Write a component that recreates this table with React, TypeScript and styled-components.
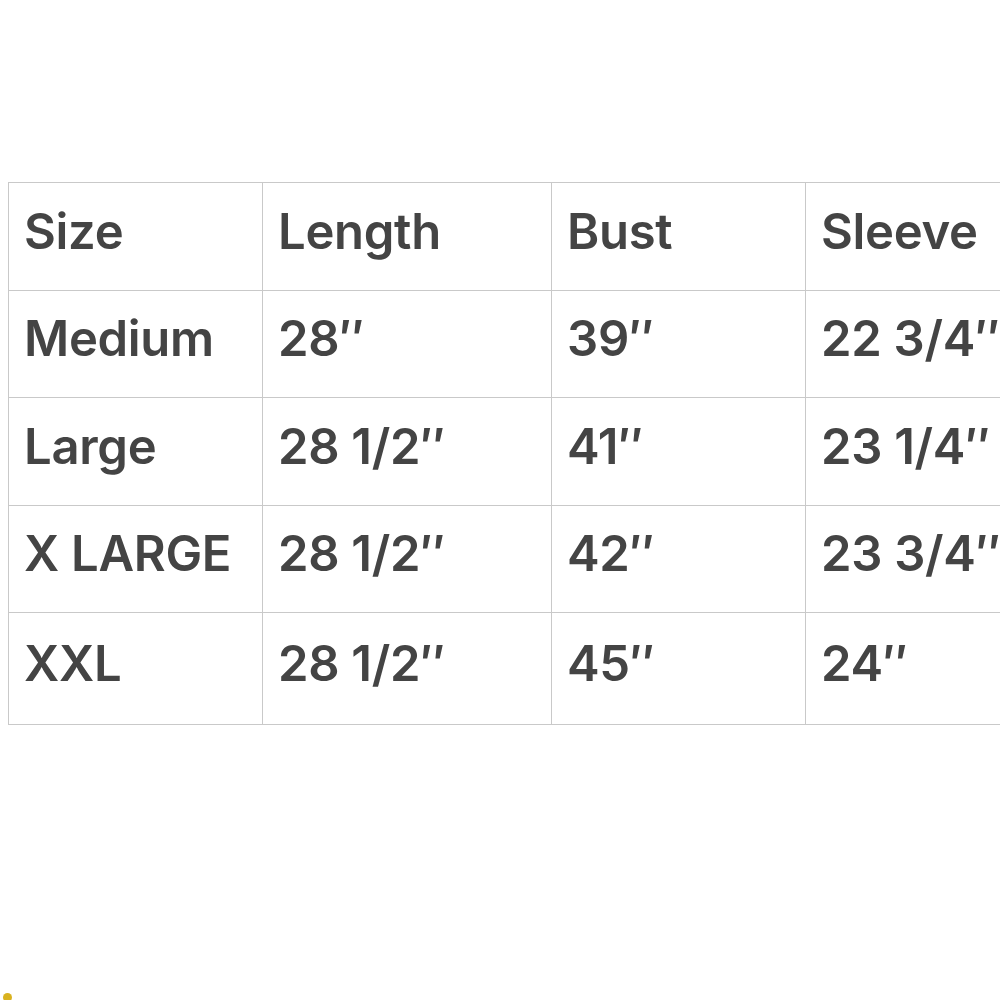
import styled, { createGlobalStyle } from "styled-components";

const GlobalStyle = createGlobalStyle`
  html, body {
    margin: 0;
    padding: 0;
    background: #ffffff;
    overflow: hidden;
  }
  body {
    font-family: Inter, "Liberation Sans", Arial, sans-serif;
  }
`;

const rows: string[][] = [
  ["Size", "Length", "Bust", "Sleeve"],
  ["Medium", "28″", "39″", "22 3/4″"],
  ["Large", "28 1/2″", "41″", "23 1/4″"],
  ["X LARGE", "28 1/2″", "42″", "23 3/4″"],
  ["XXL", "28 1/2″", "45″", "24″"],
];

const colWidths = [254, 289, 254, 260];

function App() {
  return (
    <Page>
      <GlobalStyle />
      <Frame>
        <SizeTable>
          <colgroup>
            {colWidths.map((w, i) => (
              <col key={i} style={{ width: w }} />
            ))}
          </colgroup>
          <tbody>
            {rows.map((row, r) => (
              <Row key={r} $last={r === rows.length - 1}>
                {row.map((cell, c) => (
                  <Cell key={c}>{cell}</Cell>
                ))}
              </Row>
            ))}
          </tbody>
        </SizeTable>
      </Frame>
      <Dot />
    </Page>
  );
}

const Page = styled.div`
  width: 1000px;
  height: 1000px;
  overflow: hidden;
  padding-top: 182px;
  box-sizing: border-box;
`;

const Frame = styled.div`
  padding-left: 8px;
  width: 1100px;
`;

const SizeTable = styled.table`
  border-collapse: collapse;
  table-layout: fixed;
  width: 1057px;
`;

const Row = styled.tr<{ $last?: boolean }>`
  height: ${(p) => (p.$last ? "112px" : "107.5px")};
`;

const Cell = styled.td`
  border: 1px solid #c9c9c9;
  padding: 0 0 10px 15px;
  vertical-align: middle;
  color: #444444;
  font-family: Inter, "Liberation Sans", Arial, sans-serif;
  font-weight: 600;
  font-size: 49px;
  letter-spacing: -0.3px;
  white-space: nowrap;
  overflow: hidden;
`;

const Dot = styled.div`
  position: absolute;
  left: 3px;
  top: 993px;
  width: 9px;
  height: 9px;
  border-radius: 50%;
  background: #d9b21f;
`;

export default App;
